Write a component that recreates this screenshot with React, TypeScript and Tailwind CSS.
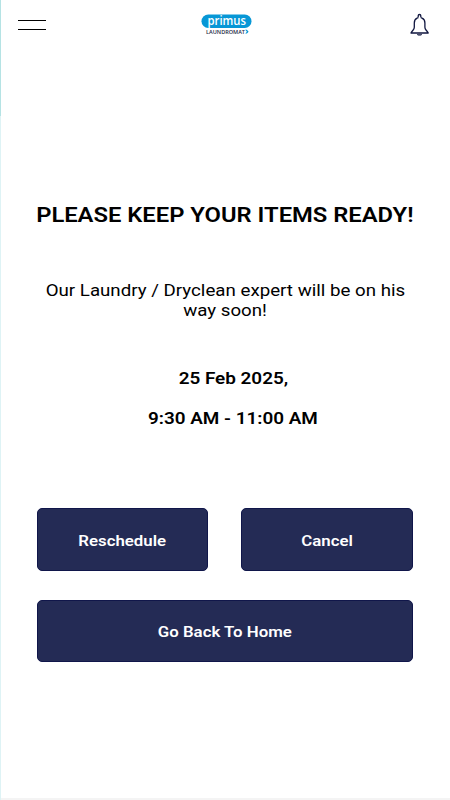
import React from "react";

const BellIcon: React.FC = () => (
  <svg className="w-6 h-6" viewBox="0 0 24 24" fill="none" stroke="#10163f" strokeWidth="1.3" strokeLinejoin="round">
    <path d="M10.2 4.6V2.8a1.3 1.3 0 0 1 2.6 0v1.8" />
    <path d="M9.2 5.2C7.3 6 6.3 7.8 6.3 10v4.2c0 1.4-.5 2.100-1.300 3-.9 1-1.700 1.700-2 2.800h17.200c-.3-1.100-1.100-1.800-2-2.800-.8-.9-1.300-1.600-1.300-3V10c0-2.200-1-4-2.900-4.800" />
    <path d="M9.2 5.2l1-.6M13 4.600l1 .6" />
    <path d="M9 21.4h5l-1.300.9h-2.400Z" fill="#10163f" strokeWidth="0.5" />
  </svg>
);

const Logo: React.FC = () => (
  <svg className="mr-px w-[52px] h-6" viewBox="0 0 52 24" fontFamily="Open Sans, sans-serif">
    <rect x="0.5" y="1.5" width="50" height="13.5" rx="6.75" fill="#0797d6" />
    <text x="6.5" y="11.5" fontSize="12" fontWeight="600" fill="#fff" textLength="38.5" lengthAdjust="spacingAndGlyphs">primus</text>
    <text x="5" y="20.5" fontSize="5" fontWeight="600" fill="#242b45" textLength="39" lengthAdjust="spacingAndGlyphs">LAUNDROMAT</text>
    <path d="M44.2 16.8h1.700l1.700 1.900-1.700 1.900h-1.700l1.700-1.900Z" fill="#0797d6" />
  </svg>
);

type ActionButtonProps = {
  label: string;
  className?: string;
};

const ActionButton: React.FC<ActionButtonProps> = ({ label, className = "" }) => (
  <button
    className={`flex items-center justify-center rounded-[5px] border border-[#10164a] bg-[#242b55] pt-0.5 text-[15px] leading-5 font-semibold text-white ${className}`}
  >
    <span className="block scale-x-[1.12] whitespace-nowrap">{label}</span>
  </button>
);

const App: React.FC = () => {
  return (
    <div className="flex h-[800px] w-[450px] overflow-hidden bg-white font-[Roboto,sans-serif] text-black">
      <div className="flex w-px shrink-0 flex-col">
        <div className="h-[116px] bg-[#b5e3e4]" />
        <div className="grow bg-[#def3f5]" />
      </div>

      <div className="flex grow flex-col border-b-2 border-[#f4f4f4]">
        <header className="flex h-[50px] items-center justify-between pr-[18px] pl-[17px]">
          <button className="flex w-7 flex-col gap-2" aria-label="Menu">
            <span className="h-px w-full bg-black" />
            <span className="h-px w-full bg-black" />
          </button>
          <Logo />
          <button aria-label="Notifications">
            <BellIcon />
          </button>
        </header>

        <main className="flex flex-col pt-[153px] pr-[37px] pl-9 text-center">
          <h1 className="flex h-6 items-center justify-center text-xl font-semibold">
            <span className="block scale-x-[1.188] whitespace-nowrap">PLEASE KEEP YOUR ITEMS READY!</span>
          </h1>

          <p className="mt-[53px] flex flex-col items-center text-[17px] leading-5">
            <span className="block scale-x-[1.1] whitespace-nowrap">Our Laundry / Dryclean expert will be on his</span>
            <span className="block scale-x-[1.1] whitespace-nowrap">way soon!</span>
          </p>

          <div className="mt-[49px] flex flex-col items-center gap-5 pl-4 text-base leading-5 font-semibold">
            <span className="block scale-x-[1.18] whitespace-nowrap">25 Feb 2025,</span>
            <span className="block scale-x-[1.18] whitespace-nowrap">9:30 AM - 11:00 AM</span>
          </div>

          <div className="mt-[79px] grid grid-cols-[171px_172px] gap-x-[33px] gap-y-[29px]">
            <ActionButton label="Reschedule" className="h-[63px]" />
            <ActionButton label="Cancel" className="h-[63px]" />
            <ActionButton label="Go Back To Home" className="col-span-2 h-[62px]" />
          </div>
        </main>
      </div>
    </div>
  );
};

export default App;
